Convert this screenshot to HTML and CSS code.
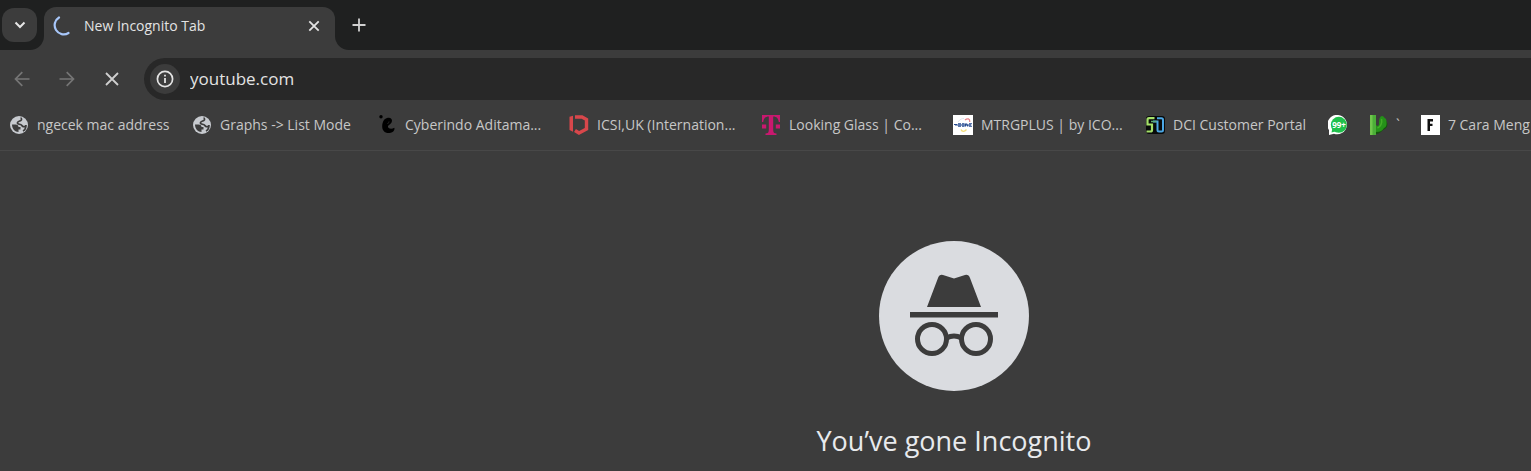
FILE: index.html
```html
<!DOCTYPE html>
<html lang="en">
<head>
<meta charset="utf-8">
<title>New Incognito Tab</title>
<link rel="stylesheet" href="styles.css">
</head>
<body>
<header class="browser">
  <div class="tabstrip">
    <div class="strip-start">
      <button class="tab-search" aria-label="Search tabs">
        <svg width="20" height="20" viewBox="0 0 20 20"><path d="M5.500 7.500l4.500 4.500 4.500-4.500" fill="none" stroke="#e6e6e6" stroke-width="2"/></svg>
      </button>
    </div>
    <div class="tab">
      <svg class="spinner" width="20" height="20" viewBox="0 0 20 20"><path d="M7 1.500A8.500 8.500 0 0 0 16.500 17" fill="none" stroke="#a8c7fa" stroke-width="2.200" stroke-linecap="round"/></svg>
      <span class="tab-title">New Incognito Tab</span>
      <button class="icon-button tab-close" aria-label="Close tab">
        <svg width="20" height="20" viewBox="0 0 20 20"><path d="M5.300 5.300l9.400 9.400M14.700 5.300l-9.400 9.400" stroke="#e3e3e3" stroke-width="1.800"/></svg>
      </button>
    </div>
    <div class="strip-end">
      <button class="icon-button" aria-label="New tab">
        <svg width="20" height="20" viewBox="0 0 20 20"><path d="M10 3.500v13M3.500 10h13" stroke="#d0d0d0" stroke-width="1.800"/></svg>
      </button>
    </div>
  </div>

  <div class="toolbar">
    <button class="icon-button" aria-label="Back" disabled>
      <svg width="20" height="20" viewBox="0 0 20 20"><path d="M17.500 10H4M10.300 3.200L3.500 10l6.800 6.800" fill="none" stroke="#757575" stroke-width="1.700"/></svg>
    </button>
    <button class="icon-button" aria-label="Forward" disabled>
      <svg width="20" height="20" viewBox="0 0 20 20"><path d="M2.500 10H16M9.700 3.200l6.800 6.800-6.800 6.800" fill="none" stroke="#757575" stroke-width="1.700"/></svg>
    </button>
    <button class="icon-button" aria-label="Stop loading">
      <svg width="20" height="20" viewBox="0 0 20 20"><path d="M4 4l12 12M16 4L4 16" stroke="#cfcfcf" stroke-width="1.800"/></svg>
    </button>
    <div class="omnibox">
      <button class="site-info" aria-label="View site information">
        <svg width="20" height="20" viewBox="0 0 20 20"><circle cx="10" cy="10" r="7.600" fill="none" stroke="#e3e3e3" stroke-width="1.700"/><path d="M10 9v5M10 5.800v1.800" stroke="#e3e3e3" stroke-width="1.800"/></svg>
      </button>
      <input class="address" type="text" aria-label="Address" value="youtube.com">
    </div>
  </div>

  <nav class="bookmarks" aria-label="Bookmarks">
    <a class="bookmark" href="#">
      <svg width="20" height="20" viewBox="0 0 20 20"><circle cx="10" cy="10" r="9" fill="#c7cacf"/><path d="M3 9.500h3.500c2 0 3 1 3 2.500h2v2.500H9.500V17C6 17 3 14 3 9.500z" fill="#3c3c3c"/><path d="M11.500 3c1 0 1.500 1.500.5 2.300S9 6 8.500 7.500 10 9 11.500 9.500s1.500 2 3 2.200 2.500-.7 2.500-1.700c0 2-1 5-3 6" fill="none" stroke="#3c3c3c" stroke-width="1.700"/></svg>
      <span class="label">ngecek mac address</span>
    </a>
    <a class="bookmark" href="#">
      <svg width="20" height="20" viewBox="0 0 20 20"><circle cx="10" cy="10" r="9" fill="#c7cacf"/><path d="M3 9.500h3.500c2 0 3 1 3 2.500h2v2.500H9.500V17C6 17 3 14 3 9.500z" fill="#3c3c3c"/><path d="M11.500 3c1 0 1.500 1.500.5 2.300S9 6 8.500 7.500 10 9 11.500 9.500s1.500 2 3 2.200 2.500-.7 2.500-1.700c0 2-1 5-3 6" fill="none" stroke="#3c3c3c" stroke-width="1.700"/></svg>
      <span class="label label-wide">Graphs -&gt; List Mode</span>
    </a>
    <a class="bookmark" href="#">
      <svg width="20" height="20" viewBox="0 0 20 20"><circle cx="4" cy="1.800" r="1.700"/><path d="M10 3c3-1 5.200.5 5 3-.2 2.500-3 3.500-4 5-.7 2.500 3.300 3.500 6.300 1.800.8 1.800-.8 4.900-4.800 5.200-4.700.4-7.500-2.500-7.300-7 .2-4 1.800-7.200 4.800-8z"/><path d="M12 6.500c0 1-.8 1.500-1.500 2.500" fill="none" stroke="#333" stroke-width=".8"/></svg>
      <span class="label label-capped">Cyberindo Aditama...</span>
    </a>
    <a class="bookmark" href="#">
      <svg width="20" height="20" viewBox="0 0 20 20"><path d="M.5 1.800l3.500-1v16L.5 15z" fill="#d8474b"/><path d="M6 2h7l4.500 2.500V14l-7.500 4-4-2.500" fill="none" stroke="#d8474b" stroke-width="3.400"/></svg>
      <span class="label label-capped">ICSI,UK (Internation...</span>
    </a>
    <a class="bookmark" href="#">
      <svg width="20" height="20" viewBox="0 0 20 20"><path d="M1 0h18v7h-1.200C17.300 3.500 15.800 1.600 12.200 1.500V15c0 2.500.8 3.400 3.300 3.500V20h-11v-1.500c2.500-.1 3.300-1 3.300-3.500V1.500C4.200 1.600 2.700 3.500 2.200 7H1zM1 9.500h4.200v4H1zM14.800 9.500H19v4h-4.200z" fill="#c9186f"/></svg>
      <span class="label label-capped">Looking Glass | Co...</span>
    </a>
    <a class="bookmark" href="#">
      <svg width="20" height="20" viewBox="0 0 20 20"><path fill="#fff" d="M0 0h20v20H0z"/><path d="M12 5c2.500-2 5-1.500 4.800 2" fill="none" stroke="#e9838b" stroke-width="1.300"/><path d="M8 14.500c1 2.500 3.500 2.500 5.500 0" fill="none" stroke="#f3dc77" stroke-width="1.300"/><path d="M5 7c2-3 4-3.500 6-3.500" fill="none" stroke="#d9deea" stroke-width=".8"/><path d="M1 9.500h3m1-.7h3m-3 2.400h3m1-2.400h2.500m-2.500 2.400h2.500m1-2.700v3m1-3l1.500 3m1-2.700h3m-3 2.400h3M2 10h16" stroke="#24498e" stroke-width="1.100"/></svg>
      <span class="label label-capped">MTRGPLUS | by ICO...</span>
    </a>
    <a class="bookmark" href="#">
      <svg width="20" height="20" viewBox="0 0 20 20"><rect x="1" y="1" width="19" height="18" rx="3" fill="#080a0a"/><path d="M9.500 3.200H4q-1.500 0-1.500 1.500V9.500H7V15q0 1.500-1.500 1.500H1.500" fill="none" stroke="#a5e06a" stroke-width="2.200"/><path d="M8 6.500h4.500V15q0 1.500 1.500 1.500h2.500q1.500 0 1.500-1.500V4.700Q18 3.200 16.500 3.200H12" fill="none" stroke="#4ba6e3" stroke-width="2"/><path d="M6 6.500h5.500" fill="none" stroke="#5eaa78" stroke-width="1.500"/></svg>
      <span class="label">DCI Customer Portal</span>
    </a>
    <a class="bookmark" href="#" aria-label="Messages">
      <svg width="20" height="20" viewBox="0 0 20 20"><path d="M10.300 0A9.700 9.700 0 1 1 6 18.800L1 20V15A9.700 9.700 0 0 1 10.300 0z" fill="#fff"/><circle cx="10.800" cy="9.800" r="8" fill="#1fc04b"/><path d="M3.500 17.500l.8-4 3 3z" fill="#1fc04b"/><text class="badge-text" x="11" y="13" text-anchor="middle">99+</text></svg>
    </a>
    <a class="bookmark" href="#">
      <svg width="20" height="20" viewBox="0 0 20 20"><path d="M2 0h6v20H2z" fill="#4cae38"/><path d="M2 0h2.500v20H2z" fill="#70c64d"/><path d="M17 5c4 3 3 8-2 10-2 2-4 4-7 4v-3z" fill="#16520f"/><path d="M8 10c2 2 3 1 3-2 0-4 1-7 3-7s2 2 4 3c1 4 1 8-2 9-2 3-4 4-8 4z" fill="#259119"/><path d="M13.500 4c1 4-1 8-4 9" fill="none" stroke="#42ac28" stroke-width="1.500"/></svg>
      <span>`</span>
    </a>
    <a class="bookmark" href="#">
      <svg width="20" height="20" viewBox="0 0 20 20"><path d="M1 0h19v20H1z" fill="#fff"/><path d="M7.500 4H13v2.400h-3v2.400h2.500V11H10v5H7.500z" fill="#111"/></svg>
      <span class="label-clipped">7 Cara Meng</span>
    </a>
  </nav>
</header>

<main class="page">
  <svg class="incognito" width="150" height="150" viewBox="0 0 150 150">
    <circle cx="75" cy="75" r="75" fill="#dadce0"/>
    <g fill="#3c3c3c"><path d="M48 66L59 37q1.500-4 5-3l11 3.500L86 34q3.500-1 5 3l11 29z"/><path d="M31 71h88v5.500H31z"/></g>
    <g fill="none" stroke="#3c3c3c" stroke-width="5"><circle cx="53" cy="98" r="14.500"/><circle cx="97" cy="98" r="14.500"/><path d="M67.500 97q7.500-4 15 0"/></g>
  </svg>
  <h1 class="headline">You’ve gone Incognito</h1>
</main>
</body>
</html>
```
FILE: styles.css
```css
* { box-sizing: border-box; }

body {
  margin: 0;
  min-height: 100vh;
  overflow-x: hidden;
  background: #3c3c3c;
  color: #e3e3e3;
  font-family: "Open Sans", "Noto Sans", sans-serif;
}

button {
  display: flex;
  align-items: center;
  justify-content: center;
  padding: 0;
  border: 0;
  background: none;
}

svg { display: block; flex: none; }

.tabstrip { display: flex; height: 50px; background: #3c3c3c; }

.strip-start {
  width: 44px;
  padding: 8px 0 0 2px;
  background: #1f2020;
  border-bottom-right-radius: 14px;
}

.tab-search {
  width: 35px;
  height: 34px;
  border-radius: 12px;
  background: #3c3c3c;
}

.tab {
  display: flex;
  align-items: center;
  width: 291px;
  padding: 0 11px 6px 8px;
  border-top: 7px solid #1f2020;
  background: #1f2020;
  position: relative;
  isolation: isolate;
}

.tab::before {
  content: "";
  position: absolute;
  inset: 0;
  z-index: -1;
  border-radius: 12px 12px 0 0;
  background: #3c3c3c;
}

.tab-title { flex: 1; margin-left: 12px; font-size: 14px; line-height: 20px; }

.icon-button { width: 20px; height: 20px; }

.strip-end {
  flex: 1;
  padding: 15px 14px;
  background: #1f2020;
  border-bottom-left-radius: 14px;
}

.toolbar {
  display: flex;
  align-items: center;
  gap: 25px;
  height: 58px;
  padding-left: 12px;
}

.omnibox {
  flex: 1;
  display: flex;
  align-items: center;
  gap: 10px;
  height: 42px;
  margin-left: -3px;
  padding-left: 6px;
  border-radius: 21px 0 0 21px;
  background: #282828;
}

.site-info { width: 30px; height: 30px; border-radius: 50%; background: #3c3c3c; }

.address {
  flex: 1;
  min-width: 0;
  padding: 0;
  border: 0;
  outline: 0;
  background: none;
  color: #e3e3e3;
  font: 17px/24px "Open Sans", "Noto Sans", sans-serif;
}

.bookmarks {
  display: flex;
  gap: 20px;
  height: 43px;
  padding: 7px 0 0 9px;
  overflow: hidden;
  border-bottom: 1px solid #484848;
}

.bookmark {
  display: flex;
  flex: none;
  gap: 8px;
  height: 20px;
  color: #c7c7c7;
  font-size: 14px;
  line-height: 20px;
  text-decoration: none;
  white-space: nowrap;
}

.label { min-width: 135px; }
.label-wide { min-width: 137px; }
.label-capped { width: 144px; }

.bookmark:last-child { flex: 0 1 auto; min-width: 0; }
.label-clipped { min-width: 0; overflow: hidden; }

.badge-text { fill: #fff; font: bold 8px "Open Sans", sans-serif; }

.page {
  display: flex;
  flex-direction: column;
  align-items: center;
  padding: 90px 0 0 377px;
}

.headline {
  margin: 32px 0 0;
  color: #e8eaed;
  font-size: 27px;
  font-weight: 400;
  line-height: 36px;
}
```
